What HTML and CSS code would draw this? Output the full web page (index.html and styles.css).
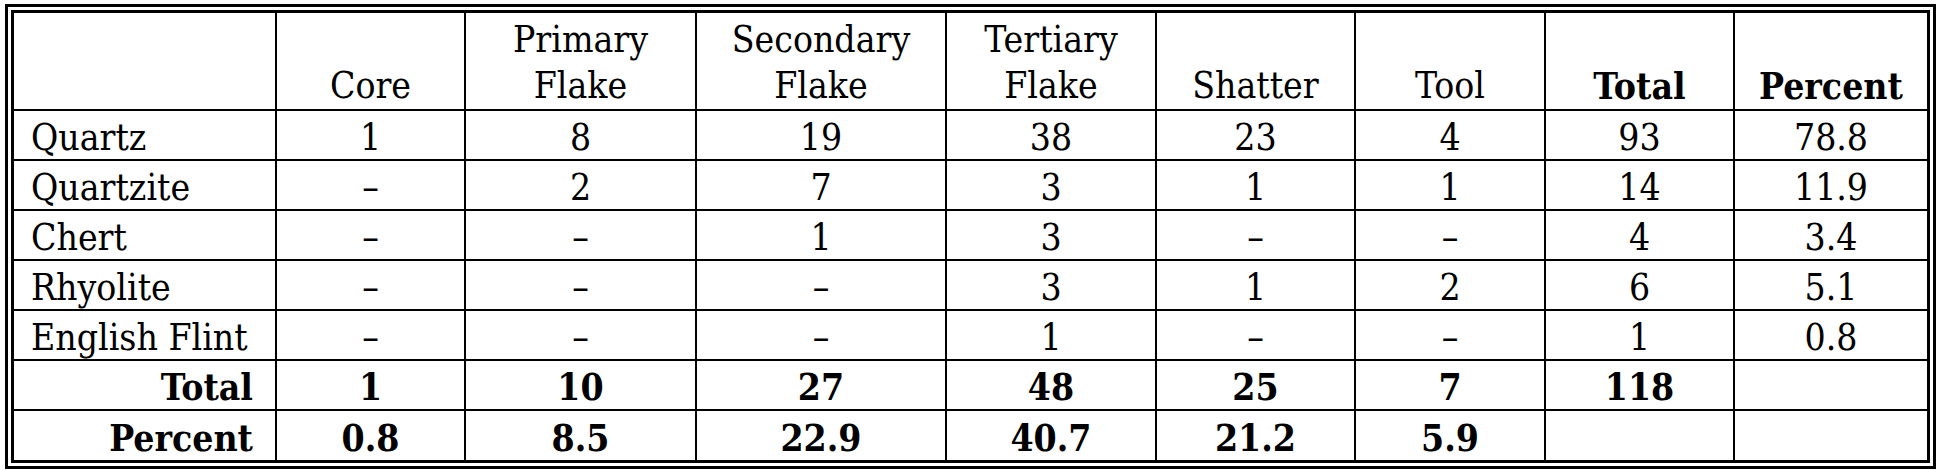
FILE: index.html
```html
<!DOCTYPE html>
<html>
<head>
<meta charset="utf-8">
<link rel="stylesheet" href="styles.css">
</head>
<body>
<div class="tbl">
  <div class="cell hd"></div>
  <div class="cell hd">Core</div>
  <div class="cell hd">Primary<br>Flake</div>
  <div class="cell hd">Secondary<br>Flake</div>
  <div class="cell hd">Tertiary<br>Flake</div>
  <div class="cell hd">Shatter</div>
  <div class="cell hd">Tool</div>
  <div class="cell hd b">Total</div>
  <div class="cell hd b last">Percent</div>

  <div class="cell lbl">Quartz</div>
  <div class="cell">1</div><div class="cell">8</div><div class="cell">19</div><div class="cell">38</div><div class="cell">23</div><div class="cell">4</div><div class="cell">93</div><div class="cell last">78.8</div>

  <div class="cell lbl">Quartzite</div>
  <div class="cell">–</div><div class="cell">2</div><div class="cell">7</div><div class="cell">3</div><div class="cell">1</div><div class="cell">1</div><div class="cell">14</div><div class="cell last">11.9</div>

  <div class="cell lbl">Chert</div>
  <div class="cell">–</div><div class="cell">–</div><div class="cell">1</div><div class="cell">3</div><div class="cell">–</div><div class="cell">–</div><div class="cell">4</div><div class="cell last">3.4</div>

  <div class="cell lbl">Rhyolite</div>
  <div class="cell">–</div><div class="cell">–</div><div class="cell">–</div><div class="cell">3</div><div class="cell">1</div><div class="cell">2</div><div class="cell">6</div><div class="cell last">5.1</div>

  <div class="cell lbl">English Flint</div>
  <div class="cell">–</div><div class="cell">–</div><div class="cell">–</div><div class="cell">1</div><div class="cell">–</div><div class="cell">–</div><div class="cell">1</div><div class="cell last">0.8</div>

  <div class="cell lbl-r b">Total</div>
  <div class="cell b">1</div><div class="cell b">10</div><div class="cell b">27</div><div class="cell b">48</div><div class="cell b">25</div><div class="cell b">7</div><div class="cell b">118</div><div class="cell last"></div>

  <div class="cell lbl-r b end">Percent</div>
  <div class="cell b end">0.8</div><div class="cell b end">8.5</div><div class="cell b end">22.9</div><div class="cell b end">40.7</div><div class="cell b end">21.2</div><div class="cell b end">5.9</div><div class="cell end"></div><div class="cell last end"></div>
</div>
</body>
</html>
```
FILE: styles.css
```css
html, body {
  margin: 0;
  padding: 0;
  background: #fff;
}
body {
  font-family: "DejaVu Serif Condensed", "DejaVu Serif", serif;
  font-stretch: condensed;
  font-size: 37px;
  color: #000;
}
.tbl {
  display: inline-grid;
  margin: 4px 0 0 5px;
  border: 9px double #000;
  grid-template-columns: 263px 189px 231px 250px 210px 199px 190px 189px 192px;
  grid-template-rows: 98px repeat(6, 50px) 49px;
}
.cell {
  box-sizing: border-box;
  border-right: 2px solid #000;
  border-bottom: 2px solid #000;
  display: flex;
  align-items: center;
  justify-content: center;
  text-align: center;
  line-height: 43px;
  padding-top: 5px;
  white-space: nowrap;
}
.cell.last { border-right: none; }
.cell.end { border-bottom: none; }
.hd {
  align-items: flex-end;
  padding-top: 0;
  padding-bottom: 0;
  line-height: 46px;
}
.lbl {
  justify-content: flex-start;
  text-align: left;
  padding-left: 17px;
}
.lbl-r {
  justify-content: flex-end;
  text-align: right;
  padding-right: 22px;
}
.b { font-weight: bold; }
```
